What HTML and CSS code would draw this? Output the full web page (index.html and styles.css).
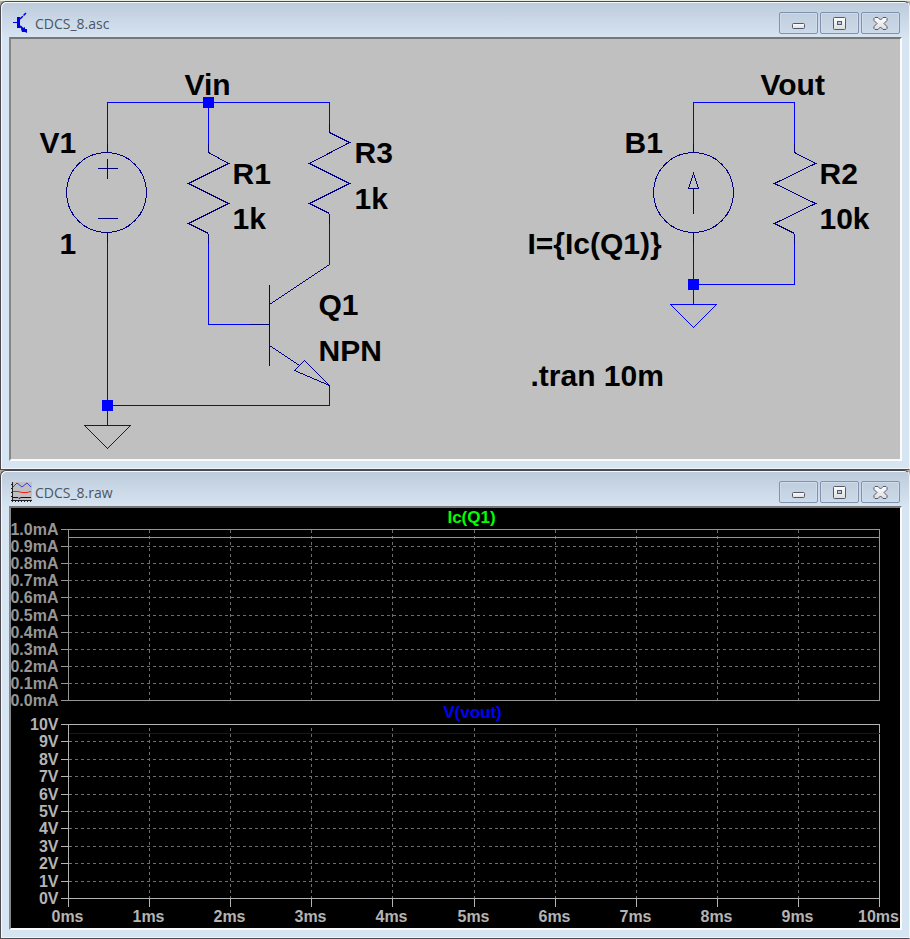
FILE: index.html
```html
<!DOCTYPE html>
<html lang="en">
<head>
<meta charset="utf-8">
<title>CDCS_8</title>
<link rel="stylesheet" href="styles.css">
</head>
<body>
<svg class="defs" aria-hidden="true">
  <defs>
    <linearGradient id="face" x1="0" y1="0" x2="0" y2="1"><stop offset="0" stop-color="#ffffff"/><stop offset="1" stop-color="#dcdcdc"/></linearGradient>
    <symbol id="min" viewBox="0 0 37 20"><rect x="12.5" y="10.500" width="12" height="5" rx="1" fill="url(#face)" stroke="#54586c"/></symbol>
    <symbol id="max" viewBox="0 0 37 20"><path d="M13.500 4.500h10q1 0 1 1v10q0 1-1 1h-10q-1 0-1-1v-10q0-1 1-1z" fill="url(#face)" stroke="#54586c"/><rect x="16.500" y="8.500" width="4" height="3" fill="#b8cbe0" stroke="#54586c"/></symbol>
    <symbol id="close" viewBox="0 0 37 20"><path d="M13 4.500h3l2.500 2.500 2.500-2.500h3l1 1v2l-3 3 3 3v2l-1 1h-3l-2.500-2.500-2.500 2.500h-3l-1-1v-2l3-3-3-3v-2z" fill="url(#face)" stroke="#54586c" stroke-linejoin="round"/></symbol>
  </defs>
</svg>
<main class="desktop">
  <section class="window">
    <header class="titlebar">
      <svg class="icon" viewBox="0 0 22 22" aria-hidden="true"><g fill="none" stroke="#0000e0"><path d="M2 10.500h5"/><path d="M7.500 5v11" stroke-width="3"/><path d="M9 7l6-6" stroke-width="1.500" stroke-dasharray="4 1"/><path d="M9 14l3 3" stroke-width="2"/></g><path d="M10 17l4-2v2h2v4l-2-1h-3z" fill="#0000e0"/></svg>
      <h1 class="title">CDCS_8.asc</h1>
      <div class="controls">
        <button type="button" aria-label="Minimize"><svg><use href="#min"/></svg></button>
        <button type="button" aria-label="Maximize"><svg><use href="#max"/></svg></button>
        <button type="button" aria-label="Close"><svg><use href="#close"/></svg></button>
      </div>
    </header>
    <div class="client">
      <svg class="schematic" viewBox="10.500 38.500 889 420" role="img" aria-label="Circuit schematic">
        <g class="wire">
          <path d="M107 152V102H329V132M208 102V152M107 232V425M208 233V324H250M329 213V264M329 385V405H107"/>
          <path d="M84 425H130L107 448Z"/>
          <path d="M693 152V102H794V152M794 233V284H693M693 232V304"/>
          <path d="M670 304H716L693 327Z"/>
        </g>
        <g class="part">
          <path d="M107 143V152M107 232V242M208 143V152M208 233V243M329 123V132M329 213V223M693 143V152M693 232V242M794 143V152M794 233V243"/>
          <circle cx="106" cy="192" r="40"/>
          <path d="M97 168H117M107 158V178M97 218H117"/>
          <path d="M208 152L228 163L188 183L228 203L188 223L208 233"/>
          <path d="M329 132L349 142L309 163L349 183L309 203L329 213"/>
          <path d="M249 324H269M269 284V365M329 264L269 304M269 345L299 365M304 360L294 370L329 385Z"/>
          <circle cx="693" cy="192" r="40"/>
          <path d="M693 213V188M693 173L698 188H688Z"/>
          <path d="M794 152L815 163L774 183L815 203L774 223L794 233"/>
        </g>
        <g class="node">
          <rect x="202.500" y="96.500" width="11" height="11"/>
          <rect x="101.500" y="399.500" width="11" height="11"/>
          <rect x="687.500" y="278.500" width="11" height="11"/>
        </g>
        <g class="label">
          <text x="184" y="94">Vin</text>
          <text x="39" y="152">V1</text>
          <text x="59" y="253">1</text>
          <text x="232" y="183">R1</text>
          <text x="232" y="228">1k</text>
          <text x="354" y="162">R3</text>
          <text x="354" y="208">1k</text>
          <text x="318" y="314">Q1</text>
          <text x="318" y="360">NPN</text>
          <text x="760" y="94">Vout</text>
          <text x="624" y="152">B1</text>
          <text x="819" y="183">R2</text>
          <text x="819" y="228">10k</text>
          <text x="527" y="253">I={Ic(Q1)}</text>
          <text x="530" y="385">.tran 10m</text>
        </g>
      </svg>
    </div>
  </section>

  <section class="window">
    <header class="titlebar">
      <svg class="icon" viewBox="0 0 22 22" aria-hidden="true"><path d="M1 1h20v18H1z" fill="#c0c0c0"/><g fill="none"><path d="M1.500 1v20M0 19.500h21" stroke="#202020"/><path d="M0 3.500h2M0 7.500h2M0 11.500h2M0 15.500h2M4.500 19v2M7.500 19v2M10.500 19v2M13.500 19v2M16.500 19v2M19.500 19v2" stroke="#202020"/><path d="M2 6l4-4 5 4 5-4 4 4" stroke="#3838f0"/><path d="M2 10.500h5l4 1h5l4-1" stroke="#f02020"/><path d="M2 16.500h5l1 1 2-1h10" stroke="#000090"/></g></svg>
      <h1 class="title">CDCS_8.raw</h1>
      <div class="controls">
        <button type="button" aria-label="Minimize"><svg><use href="#min"/></svg></button>
        <button type="button" aria-label="Maximize"><svg><use href="#max"/></svg></button>
        <button type="button" aria-label="Close"><svg><use href="#close"/></svg></button>
      </div>
    </header>
    <div class="client">
      <svg class="plot" viewBox="10.500 507.500 889 420" role="img" aria-label="Waveforms">
        <g class="grid">
          <path d="M68 546H879M68 563H879M68 580H879M68 597H879M68 615H879M68 632H879M68 649H879M68 666H879M68 683H879"/>
          <path d="M149 529V700M230 529V700M311 529V700M392 529V700M474 529V700M555 529V700M636 529V700M717 529V700M798 529V700"/>
          <path d="M68 741H879M68 759H879M68 776H879M68 794H879M68 811H879M68 828H879M68 846H879M68 863H879M68 881H879"/>
          <path d="M149 727V898M230 727V898M311 727V898M392 727V898M474 727V898M555 727V898M636 727V898M717 727V898M798 727V898"/>
        </g>
        <g class="pane-current">
          <path d="M60 529H879V700H60M68 529V700M60 546H68M60 563H68M60 580H68M60 597H68M60 615H68M60 632H68M60 649H68M60 666H68M60 683H68"/>
          <g class="y-axis">
            <text x="58" y="534">1.0mA</text>
            <text x="58" y="551">0.9mA</text>
            <text x="58" y="568">0.8mA</text>
            <text x="58" y="585">0.7mA</text>
            <text x="58" y="602">0.6mA</text>
            <text x="58" y="620">0.5mA</text>
            <text x="58" y="637">0.4mA</text>
            <text x="58" y="654">0.3mA</text>
            <text x="58" y="671">0.2mA</text>
            <text x="58" y="688">0.1mA</text>
            <text x="58" y="705">0.0mA</text>
          </g>
        </g>
        <g class="pane-voltage">
          <path d="M60 724H879V906M60 898H879M68 724V906M60 741H68M60 759H68M60 776H68M60 794H68M60 811H68M60 828H68M60 846H68M60 863H68M60 881H68M149 898V906M230 898V906M311 898V906M392 898V906M474 898V906M555 898V906M636 898V906M717 898V906M798 898V906"/>
          <g class="y-axis">
            <text x="58" y="729">10V</text>
            <text x="58" y="746">9V</text>
            <text x="58" y="764">8V</text>
            <text x="58" y="781">7V</text>
            <text x="58" y="799">6V</text>
            <text x="58" y="816">5V</text>
            <text x="58" y="833">4V</text>
            <text x="58" y="851">3V</text>
            <text x="58" y="868">2V</text>
            <text x="58" y="886">1V</text>
            <text x="58" y="903">0V</text>
          </g>
          <g class="x-axis">
            <text x="67" y="921">0ms</text>
            <text x="148" y="921">1ms</text>
            <text x="229" y="921">2ms</text>
            <text x="310" y="921">3ms</text>
            <text x="391" y="921">4ms</text>
            <text x="473" y="921">5ms</text>
            <text x="554" y="921">6ms</text>
            <text x="635" y="921">7ms</text>
            <text x="716" y="921">8ms</text>
            <text x="797" y="921">9ms</text>
            <text x="878" y="921">10ms</text>
          </g>
        </g>
        <path class="trace-current" d="M68 537H879"/>
        <path class="trace-voltage" d="M68 733H879"/>
        <text class="name-current" x="471" y="522">Ic(Q1)</text>
        <text class="name-voltage" x="472" y="717">V(vout)</text>
      </svg>
    </div>
  </section>
</main>
</body>
</html>
```
FILE: styles.css
```css
* { box-sizing: border-box; }

body {
  margin: 0;
  padding-top: 1px;
  background: #e6ede3;
  font-family: "Liberation Sans", Arial, sans-serif;
}

.defs {
  position: absolute;
  width: 0;
  height: 0;
}

.desktop { background: #b5ada0; }

.window {
  padding: 1px 7px 8px 8px;
  border: 1px solid #4c4a50;
  border-right-color: #eef5fc;
  border-radius: 6px 6px 0 0;
  background: linear-gradient(#bccbdb, #d7e4f2 36px);
  box-shadow: inset 1px 1px #f4f8fc, inset 0 -1px #eef4fa;
}

.titlebar {
  display: flex;
  align-items: flex-start;
  height: 34px;
  padding: 9px 2px 0;
}

.icon {
  width: 22px;
  height: 22px;
}

.title {
  flex: 1;
  margin: 0 2px;
  font: 400 14px/24px "Open Sans", "Noto Sans", sans-serif;
  color: #4b5663;
}

.controls {
  display: flex;
  gap: 2px;
}

.controls button {
  width: 39px;
  height: 22px;
  padding: 0;
  border: 1px solid #8190ad;
  border-radius: 2px;
  background: linear-gradient(#bfcddd, #cbd9e8);
  box-shadow: inset 0 0 0 1px #cfdceb;
}

.controls svg {
  display: block;
  width: 37px;
  height: 20px;
}

.client {
  border: 2px solid;
  border-color: #77777a #fbfbfb #fbfbfb #858588;
}

.client svg {
  display: block;
  width: 100%;
  height: auto;
}

.schematic { background: #c0c0c0; }

.wire, .part {
  fill: none;
  stroke: #0000ff;
  shape-rendering: crispEdges;
}

.part { stroke: #000080; }

.node { fill: #0000ff; }

.label {
  font-size: 30px;
  font-weight: 700;
  fill: #000;
}

.plot {
  background: #000;
  font-size: 16px;
  font-weight: 700;
}

.plot path {
  fill: none;
  shape-rendering: crispEdges;
}

.grid {
  stroke: #6e6e6e;
  stroke-dasharray: 3 3;
}

.pane-current path { stroke: #969696; }
.pane-current text { fill: #969696; }
.pane-voltage path { stroke: #b4b4b4; }
.pane-voltage text { fill: #b4b4b4; }

.y-axis { text-anchor: end; }

.x-axis,
.name-current,
.name-voltage { text-anchor: middle; }

.name-current, .name-voltage { font-size: 17px; }

.name-current { fill: #00ff00; }
.name-voltage { fill: #0000ff; }
.trace-current { stroke: #00ff00; }
.trace-voltage { stroke: #0000d8; }
```
